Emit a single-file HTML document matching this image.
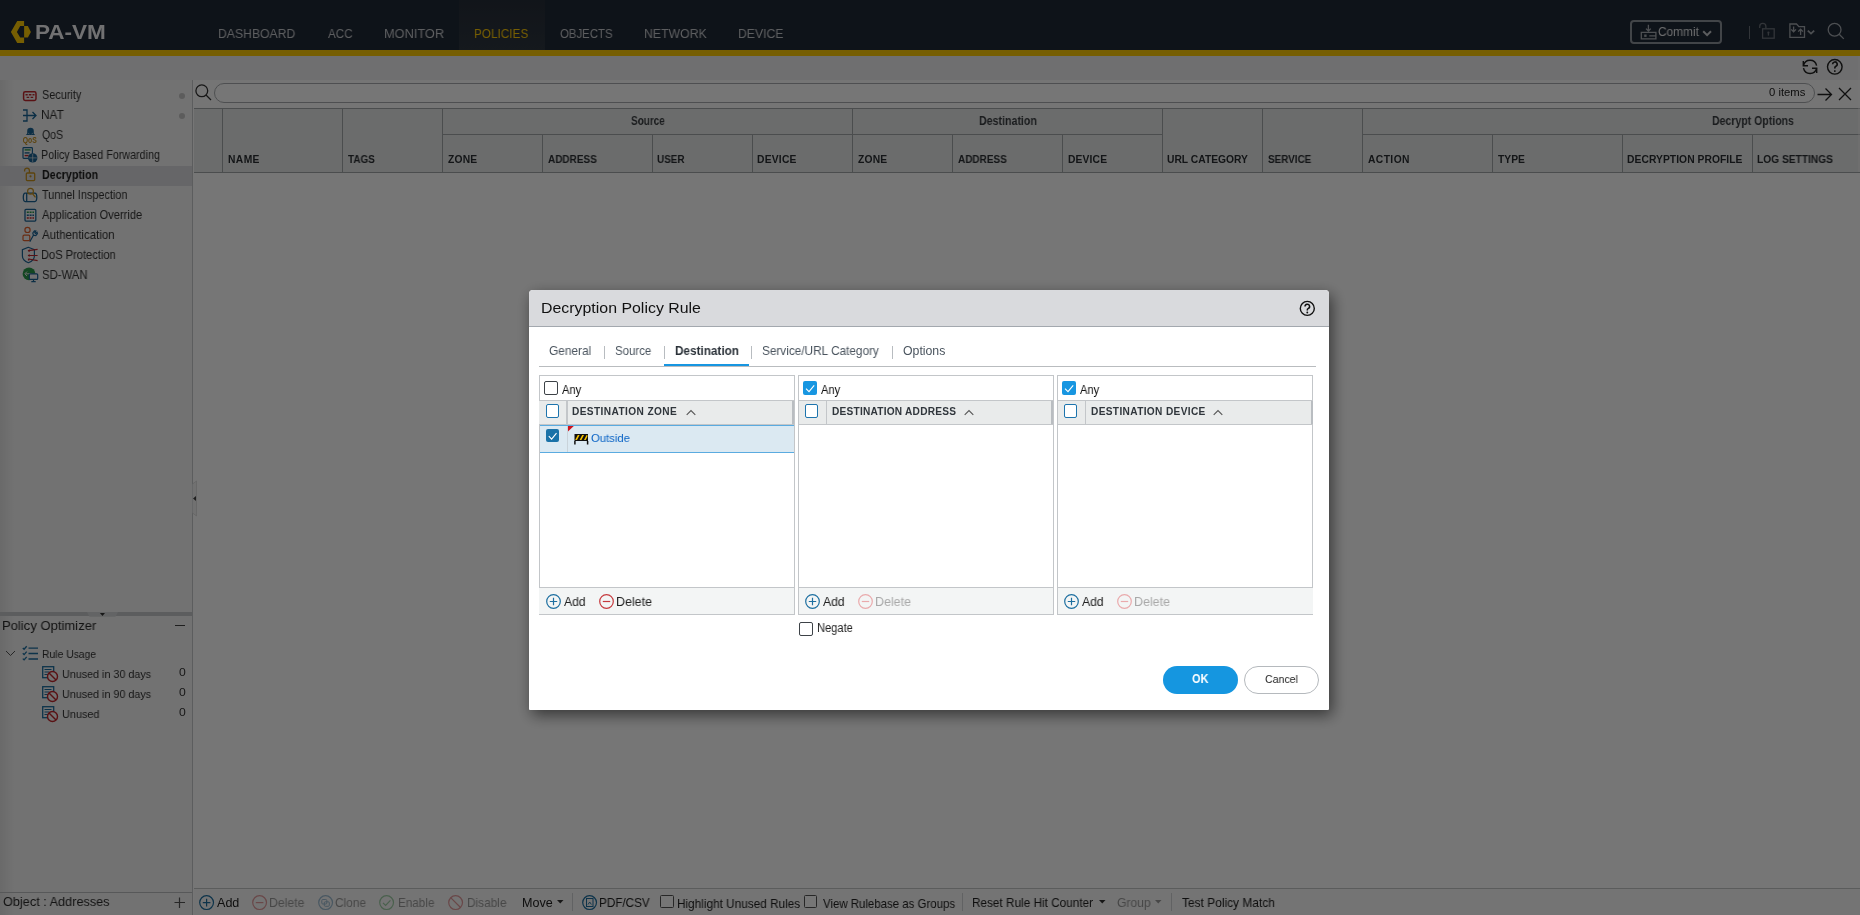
<!DOCTYPE html>
<html><head><meta charset="utf-8"><style>
*{box-sizing:border-box;margin:0;padding:0}
html,body{width:1860px;height:915px;overflow:hidden;background:#fff;font-family:"Liberation Sans",sans-serif;color:#333}
.a{position:absolute}
.t{position:absolute;white-space:nowrap;line-height:1;will-change:transform}
svg{position:absolute;overflow:visible}
</style></head><body>
<div class="a" style="left:0.00px;top:0.00px;width:1860.00px;height:50.00px;background:#202936;"></div>
<div class="a" style="left:459.00px;top:0.00px;width:86.00px;height:50.00px;background:linear-gradient(#262e39,#2e3640);"></div>
<div class="a" style="left:0.00px;top:50.00px;width:1860.00px;height:6.00px;background:#ffcb06;"></div>
<svg width="40" height="50" style="left:0;top:0"><polygon fill="#ffcb06" points="17.2,20.9 24.1,20.9 24.1,26.1 20.2,26.1 16.9,31.9 20.2,37.6 24.1,37.6 24.1,42.9 17.2,42.9 10.9,31.9"/><polygon fill="#ffcb06" points="24.1,26.1 27.9,26.1 30.9,31.9 27.9,37.6 24.1,37.6"/></svg>
<div class="t" style="left:35.24px;top:21.86px;font-size:20.29px;font-weight:bold;color:#f4f5f6;transform:scaleX(1.110);transform-origin:0 0;">PA-VM</div>
<div class="t" style="left:218.42px;top:26.91px;font-size:13.29px;color:#c9ccd0;transform:scaleX(0.919);transform-origin:0 0;">DASHBOARD</div>
<div class="t" style="left:327.94px;top:26.91px;font-size:13.29px;color:#c9ccd0;transform:scaleX(0.875);transform-origin:0 0;">ACC</div>
<div class="t" style="left:383.58px;top:26.91px;font-size:13.29px;color:#c9ccd0;transform:scaleX(0.961);transform-origin:0 0;">MONITOR</div>
<div class="t" style="left:474.46px;top:26.91px;font-size:13.29px;color:#ffcb06;transform:scaleX(0.886);transform-origin:0 0;">POLICIES</div>
<div class="t" style="left:560.39px;top:26.91px;font-size:13.29px;color:#c9ccd0;transform:scaleX(0.858);transform-origin:0 0;">OBJECTS</div>
<div class="t" style="left:644.02px;top:26.91px;font-size:13.29px;color:#c9ccd0;transform:scaleX(0.925);transform-origin:0 0;">NETWORK</div>
<div class="t" style="left:738.42px;top:26.91px;font-size:13.29px;color:#c9ccd0;transform:scaleX(0.920);transform-origin:0 0;">DEVICE</div>
<div class="a" style="left:1630.30px;top:20.30px;width:91.40px;height:23.50px;background:transparent;border:2px solid #8f959c;border-radius:4px"></div>
<svg style="left:1636px;top:18px" width="24" height="24"><g fill="none" stroke="#a9aeb3" stroke-width="1.3"><path d="M12.4 6.8v6M10 10.6l2.4 2.4 2.4-2.4"/><path d="M19.9 17.2V14.4H5.3v6.5h14.6v-3.1h-6.6"/></g><rect x="8.2" y="16.5" width="2.4" height="2.4" fill="#a9aeb3"/></svg>
<div class="t" style="left:1657.81px;top:25.81px;font-size:12.57px;color:#e8eaec;transform:scaleX(0.945);transform-origin:0 0;">Commit</div>
<svg style="left:1702px;top:29.5px" width="10" height="7"><path d="M1.2 1.3l3.9 3.9 3.9-3.9" fill="none" stroke="#c6cacd" stroke-width="2"/></svg>
<div class="a" style="left:1748.70px;top:26.20px;width:1.20px;height:12.40px;background:#6c737b;"></div>
<svg style="left:0;top:0" width="1860" height="50"><g fill="none" stroke-width="1.3"><path d="M1759.7 27.9v-1.5a3.1 3.1 0 0 1 6.2 0v2" stroke="#6c737b"/><rect x="1762.6" y="28.8" width="11.6" height="9.4" stroke="#6c737b"/><path d="M1768.4 32.8v2.8" stroke="#6c737b"/><path d="M1789.9 37.4V24h6.6l2.4 2.6h5.6v10.8z" stroke="#a5abb1"/><path d="M1793.6 26.4v5.4M1791.2 29.4l2.4 2.4 2.4-2.4M1800.6 35v-5.6M1798.2 31.6l2.4-2.4 2.4 2.4" stroke="#a5abb1"/><path d="M1807.8 30.6l3.2 3 3.2-3" stroke="#a5abb1" stroke-width="1.8"/><circle cx="1834.6" cy="29.7" r="6.4" stroke="#a5abb1"/><path d="M1839.2 34.3l4.6 4.6" stroke="#a5abb1"/></g><circle cx="1768.4" cy="32.6" r="1.1" fill="#6c737b"/></svg>
<div class="a" style="left:0.00px;top:56.00px;width:1860.00px;height:24.00px;background:#eff0f1;"></div>
<svg style="left:0;top:0" width="1860" height="80"><g fill="none" stroke="#222" stroke-width="1.4"><path d="M1803.5 65.6A6.7 6.7 0 0 1 1816.6 65.6"/><path d="M1803.3 60.9V65.7H1808"/><path d="M1816.6 68.2A6.7 6.7 0 0 1 1803.5 68.2"/><path d="M1812 68.3H1816.7V73"/><circle cx="1834.8" cy="66.8" r="7.3"/><path d="M1832.6 64.2a2.3 2.3 0 1 1 3.3 2.1c-.7.4-1.1.9-1.1 1.7v.6" stroke-width="1.6"/></g><rect x="1834" y="70.3" width="1.6" height="1.6" fill="#222"/></svg>
<div class="a" style="left:0.00px;top:80.00px;width:192.00px;height:835.00px;background:#f6f6f6;"></div>
<div class="a" style="left:0.00px;top:80.00px;width:14.00px;height:835.00px;background:linear-gradient(to right,rgba(0,0,0,0.07),rgba(0,0,0,0));"></div>
<div class="a" style="left:0.00px;top:166.00px;width:192.00px;height:20.00px;background:#dcdde0;"></div>
<div class="t" style="left:41.81px;top:88.96px;font-size:12.29px;color:#333;transform:scaleX(0.887);transform-origin:0 0;">Security</div>
<div class="t" style="left:41.35px;top:108.96px;font-size:12.29px;color:#333;transform:scaleX(0.963);transform-origin:0 0;">NAT</div>
<div class="t" style="left:41.83px;top:128.96px;font-size:12.29px;color:#333;transform:scaleX(0.852);transform-origin:0 0;">QoS</div>
<div class="t" style="left:41.44px;top:148.96px;font-size:12.29px;color:#333;transform:scaleX(0.876);transform-origin:0 0;">Policy Based Forwarding</div>
<div class="t" style="left:41.60px;top:168.96px;font-size:12.29px;font-weight:bold;color:#1c1c1c;transform:scaleX(0.874);transform-origin:0 0;">Decryption</div>
<div class="t" style="left:42.03px;top:188.96px;font-size:12.29px;color:#333;transform:scaleX(0.885);transform-origin:0 0;">Tunnel Inspection</div>
<div class="t" style="left:42.24px;top:208.96px;font-size:12.29px;color:#333;transform:scaleX(0.906);transform-origin:0 0;">Application Override</div>
<div class="t" style="left:42.24px;top:228.96px;font-size:12.29px;color:#333;transform:scaleX(0.932);transform-origin:0 0;">Authentication</div>
<div class="t" style="left:41.41px;top:248.96px;font-size:12.29px;color:#333;transform:scaleX(0.904);transform-origin:0 0;">DoS Protection</div>
<div class="t" style="left:41.79px;top:268.96px;font-size:12.29px;color:#333;transform:scaleX(0.923);transform-origin:0 0;">SD-WAN</div>
<div class="a" style="left:179px;top:93px;width:6px;height:6px;border-radius:50%;background:#c7c7c7"></div>
<div class="a" style="left:179px;top:113px;width:6px;height:6px;border-radius:50%;background:#c7c7c7"></div>
<svg style="left:0;top:0" width="192" height="300"><rect x="23.6" y="91.8" width="12.4" height="8.6" rx="1.6" fill="none" stroke="#c0272d" stroke-width="1.5"/><path d="M25.5 94.8h2.2M28.8 94.8h2.6M32.5 94.8h2M26.6 97.4h2.6M30.6 97.4h2.6" stroke="#c0272d" stroke-width="1.4"/><g fill="none" stroke="#1a6496" stroke-width="1.3"><path d="M23 110h4v11h-4M23 115.5h13M32.5 112l3.5 3.5-3.5 3.5"/></g><path d="M27.2 133.5V131a3.3 3.3 0 0 1 6.6 0v2.5l1.3 1.6H25.9z" fill="#1a6496"/><path d="M28.3 133.3l1 0.6M32.7 133.3l-1 0.6" stroke="#e8e8e8" stroke-width="0.8"/><text x="22.8" y="142.6" font-size="8.6" font-weight="bold" fill="#c8921e" font-family="Liberation Sans" textLength="14" lengthAdjust="spacingAndGlyphs">QoS</text><rect x="23" y="147.6" width="9.4" height="10.8" rx="0.8" fill="none" stroke="#1a6496" stroke-width="1.2"/><path d="M24.6 149.9h6" stroke="#2a9a4a" stroke-width="1.4"/><path d="M24.6 152.9h5" stroke="#1a6496" stroke-width="1.4"/><path d="M24.6 155.6h4" stroke="#c0272d" stroke-width="1.4"/><circle cx="32.7" cy="157.9" r="4.7" fill="#1a6496"/><path d="M32.7 153.8v8.2M28.6 157.9h8.2" stroke="#e6e6e6" stroke-width="0.7"/><g fill="none" stroke="#c8921e" stroke-width="1.3"><path d="M24.6 171.5v-1a2.4 2.4 0 0 1 4.8 0v2.4"/><rect x="26.3" y="173" width="8.4" height="7.6" rx="1"/></g><circle cx="30.5" cy="176.3" r="1.1" fill="#c8921e"/><path d="M25.2 193.1h9.6a2 4.25 0 0 1 0 8.5H25.2a1.9 4.25 0 0 1 0-8.5zM26.7 193.3v8.2" fill="none" stroke="#1a6496" stroke-width="1.3"/><circle cx="30.5" cy="191.3" r="2.9" fill="none" stroke="#c8921e" stroke-width="1.2"/><path d="M32.5 193.6l3 3.8" stroke="#c8921e" stroke-width="1.3"/><rect x="25" y="209.3" width="10.8" height="11.8" rx="1" fill="none" stroke="#1a6496" stroke-width="1.3"/><path d="M26.8 212.3h7.2" stroke="#2a9a4a" stroke-width="1.5" stroke-dasharray="2 0.8"/><path d="M26.8 215.2h7.2" stroke="#1a6496" stroke-width="1.5" stroke-dasharray="2 0.8"/><path d="M26.8 218.1h7.2" stroke="#c0272d" stroke-width="1.5" stroke-dasharray="2 0.8"/><circle cx="27.5" cy="229.9" r="2.6" fill="none" stroke="#e0602a" stroke-width="1.2"/><rect x="23" y="235.2" width="6.8" height="5.4" rx="1.2" fill="none" stroke="#e0602a" stroke-width="1.2"/><path d="M29.8 241.8l3.6-6.6M33.4 235.2l-0.6-2.2 1.6-2.2 1.4 0.2-1 1.6 0.8 0.8 1.4-1.2 0.4 1.4-1.6 2z" fill="none" stroke="#1a6496" stroke-width="1.2"/><path d="M28.4 247.3l-6 2.3v6.5c0 3.2 3 5.6 6 6.6 3-1 6-3.4 6-6.6v-6.5z" fill="none" stroke="#1a6496" stroke-width="1.2"/><path d="M37.6 249.4l-9.2 1.2M37.6 255.5h-9.6M37.6 260.6l-9.2-1.6" stroke="#c0272d" stroke-width="1.2"/><path d="M27.6 250.8l2-1.6v3zM27.6 255.5l2-1.5v3zM27.6 259l2-0.6-0.6 2.8z" fill="#c0272d"/><circle cx="29" cy="273.8" r="6.4" fill="#2a9a4a"/><path d="M31.5 273.8h-6M27 271.6l-2.2 2.2 2.2 2.2" fill="none" stroke="#e6e6e6" stroke-width="1"/><rect x="29.3" y="273.8" width="8.4" height="5.6" rx="1" fill="#f6f6f6" stroke="#1a6496" stroke-width="1.2"/><path d="M33.5 279.4v2M31.3 281.6h4.4" stroke="#1a6496" stroke-width="1.2"/></svg>
<div class="a" style="left:0.00px;top:612.00px;width:192.00px;height:4.00px;background:#c8cacc;"></div>
<svg style="left:88px;top:612px" width="30" height="5"><path d="M-1 0.1L1.6 4.8h25.8L30 0.1z" fill="#d6d8da"/><path d="M11.9 1h5.1L14.45 4z" fill="#333"/></svg>
<div class="t" style="left:2.36px;top:618.56px;font-size:13.57px;color:#2a2a2a;transform:scaleX(0.962);transform-origin:0 0;">Policy Optimizer</div>
<div class="a" style="left:174.70px;top:624.50px;width:10.50px;height:1.30px;background:#444;"></div>
<svg style="left:5px;top:650px" width="11" height="8"><path d="M1 1l4.5 4.5L10 1" fill="none" stroke="#555" stroke-width="1"/></svg>
<svg style="left:22px;top:645px" width="17" height="17"><g fill="none" stroke="#1d6fa0" stroke-width="1.3"><path d="M0.8 3l1.3 1.3 2.6-3M0.8 8.3l1.3 1.3 2.6-3M0.8 13.6l1.3 1.3 2.6-3"/><path d="M6.5 3.2h9.5M6.5 8.5h9.5M6.5 14h9.5"/></g></svg>
<div class="t" style="left:41.57px;top:649.09px;font-size:11.43px;color:#333;transform:scaleX(0.906);transform-origin:0 0;">Rule Usage</div>
<svg style="left:42px;top:666px" width="17" height="17"><rect x="0.7" y="0.7" width="11" height="11" fill="#f6f6f6" stroke="#1d6fa0" stroke-width="1.3"/><path d="M2.5 3.5h7M2.5 6h5M2.5 8.5h4" stroke="#1d6fa0" stroke-width="1"/><circle cx="10.5" cy="10.5" r="5" fill="#f6f6f6" stroke="#c0272d" stroke-width="1.4"/><path d="M7 7l7 7" stroke="#c0272d" stroke-width="1.4"/></svg>
<div class="t" style="left:61.59px;top:668.04px;font-size:11.71px;color:#333;transform:scaleX(0.919);transform-origin:0 0;">Unused in 30 days</div>
<div class="t" style="left:179.31px;top:666.63px;font-size:11.14px;color:#333;transform:scaleX(1.096);transform-origin:0 0;">0</div>
<svg style="left:42px;top:686px" width="17" height="17"><rect x="0.7" y="0.7" width="11" height="11" fill="#f6f6f6" stroke="#1d6fa0" stroke-width="1.3"/><path d="M2.5 3.5h7M2.5 6h5M2.5 8.5h4" stroke="#1d6fa0" stroke-width="1"/><circle cx="10.5" cy="10.5" r="5" fill="#f6f6f6" stroke="#c0272d" stroke-width="1.4"/><path d="M7 7l7 7" stroke="#c0272d" stroke-width="1.4"/></svg>
<div class="t" style="left:61.59px;top:688.04px;font-size:11.71px;color:#333;transform:scaleX(0.919);transform-origin:0 0;">Unused in 90 days</div>
<div class="t" style="left:179.31px;top:686.63px;font-size:11.14px;color:#333;transform:scaleX(1.096);transform-origin:0 0;">0</div>
<svg style="left:42px;top:706px" width="17" height="17"><rect x="0.7" y="0.7" width="11" height="11" fill="#f6f6f6" stroke="#1d6fa0" stroke-width="1.3"/><path d="M2.5 3.5h7M2.5 6h5M2.5 8.5h4" stroke="#1d6fa0" stroke-width="1"/><circle cx="10.5" cy="10.5" r="5" fill="#f6f6f6" stroke="#c0272d" stroke-width="1.4"/><path d="M7 7l7 7" stroke="#c0272d" stroke-width="1.4"/></svg>
<div class="t" style="left:61.58px;top:708.04px;font-size:11.71px;color:#333;transform:scaleX(0.930);transform-origin:0 0;">Unused</div>
<div class="t" style="left:179.31px;top:706.63px;font-size:11.14px;color:#333;transform:scaleX(1.096);transform-origin:0 0;">0</div>
<div class="a" style="left:0.00px;top:891.50px;width:192.00px;height:1.50px;background:#bdbfc1;"></div>
<div class="t" style="left:2.83px;top:895.46px;font-size:13.57px;color:#2a2a2a;transform:scaleX(0.936);transform-origin:0 0;">Object : Addresses</div>
<svg style="left:174px;top:897px" width="12" height="12"><path d="M5.5 0.5v10.5M0.5 5.5h10.5" stroke="#555" stroke-width="1.2"/></svg>
<div class="a" style="left:192.00px;top:80.00px;width:1.20px;height:835.00px;background:#c6c9cc;"></div>
<svg style="left:192px;top:481px" width="6" height="36"><path d="M0.5 3L4.5 0v35L0.5 32" fill="#f4f4f4" stroke="#cfcfcf" stroke-width="0.6"/><path d="M1 17.5L4 15v5z" fill="#444"/></svg>
<div class="a" style="left:193.60px;top:80.00px;width:1666.40px;height:28.00px;background:#fdfdfd;"></div>
<svg style="left:195px;top:84px" width="18" height="18"><circle cx="6.8" cy="6.8" r="5.9" fill="none" stroke="#333" stroke-width="1.3"/><path d="M11 11l5 5" stroke="#333" stroke-width="1.3"/></svg>
<div class="a" style="left:214.30px;top:83.00px;width:1600.30px;height:19.70px;background:#fff;border:1.3px solid #a9acaf;border-radius:10px"></div>
<div class="t" style="left:1769.25px;top:86.51px;font-size:11.29px;color:#222;transform:scaleX(0.987);transform-origin:0 0;">0 items</div>
<svg style="left:1817px;top:87px" width="16" height="15"><path d="M0.5 7.5h14M8.5 1.5l6 6-6 6" fill="none" stroke="#222" stroke-width="1.3"/></svg>
<svg style="left:1838px;top:87px" width="14" height="14"><path d="M1 1l12 12M13 1L1 13" fill="none" stroke="#222" stroke-width="1.3"/></svg>
<div class="a" style="left:193.60px;top:108.00px;width:1666.40px;height:64.50px;background:#e7e9e9;"></div>
<div class="a" style="left:193.60px;top:107.50px;width:1666.40px;height:1.50px;background:#a3a6a8;"></div>
<div class="a" style="left:193.60px;top:171.50px;width:1666.40px;height:1.50px;background:#a3a6a8;"></div>
<div class="a" style="left:442.50px;top:133.80px;width:720.10px;height:1.30px;background:#a3a6a8;"></div>
<div class="a" style="left:1362.60px;top:133.80px;width:497.40px;height:1.30px;background:#a3a6a8;"></div>
<div class="a" style="left:221.70px;top:108.00px;width:1.40px;height:64.50px;background:#a3a6a8;"></div>
<div class="a" style="left:341.90px;top:108.00px;width:1.40px;height:64.50px;background:#a3a6a8;"></div>
<div class="a" style="left:441.70px;top:108.00px;width:1.40px;height:64.50px;background:#a3a6a8;"></div>
<div class="a" style="left:851.70px;top:108.00px;width:1.40px;height:64.50px;background:#a3a6a8;"></div>
<div class="a" style="left:1161.90px;top:108.00px;width:1.40px;height:64.50px;background:#a3a6a8;"></div>
<div class="a" style="left:1261.70px;top:108.00px;width:1.40px;height:64.50px;background:#a3a6a8;"></div>
<div class="a" style="left:1361.90px;top:108.00px;width:1.40px;height:64.50px;background:#a3a6a8;"></div>
<div class="a" style="left:541.80px;top:134.50px;width:1.40px;height:38.00px;background:#a3a6a8;"></div>
<div class="a" style="left:651.80px;top:134.50px;width:1.40px;height:38.00px;background:#a3a6a8;"></div>
<div class="a" style="left:751.70px;top:134.50px;width:1.40px;height:38.00px;background:#a3a6a8;"></div>
<div class="a" style="left:951.60px;top:134.50px;width:1.40px;height:38.00px;background:#a3a6a8;"></div>
<div class="a" style="left:1061.70px;top:134.50px;width:1.40px;height:38.00px;background:#a3a6a8;"></div>
<div class="a" style="left:1491.80px;top:134.50px;width:1.40px;height:38.00px;background:#a3a6a8;"></div>
<div class="a" style="left:1621.80px;top:134.50px;width:1.40px;height:38.00px;background:#a3a6a8;"></div>
<div class="a" style="left:1751.70px;top:134.50px;width:1.40px;height:38.00px;background:#a3a6a8;"></div>
<div class="t" style="left:227.53px;top:155.06px;font-size:10.29px;font-weight:bold;color:#2b2f33;letter-spacing:0.40px;">NAME</div>
<div class="t" style="left:348.00px;top:155.06px;font-size:10.29px;font-weight:bold;color:#2b2f33;transform:scaleX(0.963);transform-origin:0 0;">TAGS</div>
<div class="t" style="left:447.69px;top:155.06px;font-size:10.29px;font-weight:bold;color:#2b2f33;letter-spacing:0.21px;">ZONE</div>
<div class="t" style="left:547.55px;top:155.06px;font-size:10.29px;font-weight:bold;color:#2b2f33;transform:scaleX(0.970);transform-origin:0 0;">ADDRESS</div>
<div class="t" style="left:657.41px;top:155.06px;font-size:10.29px;font-weight:bold;color:#2b2f33;transform:scaleX(0.960);transform-origin:0 0;">USER</div>
<div class="t" style="left:757.33px;top:155.06px;font-size:10.29px;font-weight:bold;color:#2b2f33;letter-spacing:0.23px;">DEVICE</div>
<div class="t" style="left:857.69px;top:155.06px;font-size:10.29px;font-weight:bold;color:#2b2f33;letter-spacing:0.21px;">ZONE</div>
<div class="t" style="left:957.85px;top:155.06px;font-size:10.29px;font-weight:bold;color:#2b2f33;transform:scaleX(0.970);transform-origin:0 0;">ADDRESS</div>
<div class="t" style="left:1067.53px;top:155.06px;font-size:10.29px;font-weight:bold;color:#2b2f33;letter-spacing:0.15px;">DEVICE</div>
<div class="t" style="left:1167.19px;top:155.06px;font-size:10.29px;font-weight:bold;color:#2b2f33;">URL CATEGORY</div>
<div class="t" style="left:1267.70px;top:155.06px;font-size:10.29px;font-weight:bold;color:#2b2f33;transform:scaleX(0.962);transform-origin:0 0;">SERVICE</div>
<div class="t" style="left:1367.74px;top:155.06px;font-size:10.29px;font-weight:bold;color:#2b2f33;letter-spacing:0.41px;">ACTION</div>
<div class="t" style="left:1497.90px;top:155.06px;font-size:10.29px;font-weight:bold;color:#2b2f33;transform:scaleX(0.985);transform-origin:0 0;">TYPE</div>
<div class="t" style="left:1627.33px;top:155.06px;font-size:10.29px;font-weight:bold;color:#2b2f33;letter-spacing:0.06px;">DECRYPTION PROFILE</div>
<div class="t" style="left:1757.34px;top:155.06px;font-size:10.29px;font-weight:bold;color:#2b2f33;transform:scaleX(0.991);transform-origin:0 0;">LOG SETTINGS</div>
<div class="t" style="left:631.00px;top:114.71px;font-size:12.57px;font-weight:bold;color:#3a3e42;transform:scaleX(0.794);transform-origin:0 0;">Source</div>
<div class="t" style="left:978.91px;top:114.71px;font-size:12.57px;font-weight:bold;color:#3a3e42;transform:scaleX(0.846);transform-origin:0 0;">Destination</div>
<div class="t" style="left:1711.81px;top:114.71px;font-size:12.57px;font-weight:bold;color:#3a3e42;transform:scaleX(0.838);transform-origin:0 0;">Decrypt Options</div>
<div class="a" style="left:193.60px;top:887.50px;width:1666.40px;height:1.50px;background:#c4c6c8;"></div>
<div class="a" style="left:193.60px;top:889.00px;width:1666.40px;height:26.00px;background:#fafafa;"></div>
<div class="a" style="left:1858.00px;top:56.00px;width:2.00px;height:116.00px;background:rgba(255,255,255,0.35);"></div>
<svg style="left:198.7px;top:895.3px" width="16" height="16"><circle cx="7.6" cy="7.6" r="6.9" fill="none" stroke="#1d6fa0" stroke-width="1.2"/><path d="M7.6 3.8v7.6M3.8 7.6h7.6" stroke="#1d6fa0" stroke-width="1.2"/></svg>
<div class="t" style="left:216.94px;top:896.51px;font-size:12.57px;color:#222;transform:scaleX(0.991);transform-origin:0 0;">Add</div>
<svg style="left:252.0px;top:895.3px" width="16" height="16"><circle cx="7.6" cy="7.6" r="6.9" fill="none" stroke="#e39a9c" stroke-width="1.2"/><path d="M3.8 7.6h7.6" stroke="#e39a9c" stroke-width="1.2"/></svg>
<div class="t" style="left:269.02px;top:896.51px;font-size:12.57px;color:#9a9a9a;transform:scaleX(0.978);transform-origin:0 0;">Delete</div>
<svg style="left:317.5px;top:895.3px" width="16" height="16"><circle cx="7.6" cy="7.6" r="6.9" fill="none" stroke="#9dbdd3" stroke-width="1.2"/><rect x="3.8" y="4.5" width="5" height="4.5" rx="1" fill="none" stroke="#9dbdd3" stroke-width="1"/><rect x="6.3" y="6.8" width="5" height="4.5" rx="1" fill="none" stroke="#9dbdd3" stroke-width="1"/></svg>
<div class="t" style="left:335.40px;top:896.51px;font-size:12.57px;color:#9a9a9a;transform:scaleX(0.949);transform-origin:0 0;">Clone</div>
<svg style="left:378.5px;top:895.3px" width="16" height="16"><circle cx="7.6" cy="7.6" r="6.9" fill="none" stroke="#9fd0a6" stroke-width="1.2"/><path d="M4 7.8l2.6 2.6 4.8-5" fill="none" stroke="#9fd0a6" stroke-width="1.2"/></svg>
<div class="t" style="left:398.06px;top:896.51px;font-size:12.57px;color:#9a9a9a;transform:scaleX(0.931);transform-origin:0 0;">Enable</div>
<svg style="left:447.5px;top:895.3px" width="16" height="16"><circle cx="7.6" cy="7.6" r="6.9" fill="none" stroke="#e39a9c" stroke-width="1.2"/><path d="M2.7 2.7l9.8 9.8" stroke="#e39a9c" stroke-width="1.2"/></svg>
<div class="t" style="left:467.05px;top:896.51px;font-size:12.57px;color:#9a9a9a;transform:scaleX(0.942);transform-origin:0 0;">Disable</div>
<div class="t" style="left:521.70px;top:896.51px;font-size:12.57px;color:#222;transform:scaleX(0.994);transform-origin:0 0;">Move</div>
<svg style="left:556.5px;top:900px" width="7" height="4"><path d="M0 0h6.5L3.25 3.5z" fill="#333"/></svg>
<div class="a" style="left:572.20px;top:893.00px;width:1.20px;height:18.00px;background:#d2d4d6;"></div>
<svg style="left:581.7px;top:895.3px" width="16" height="16"><circle cx="7.6" cy="7.6" r="6.9" fill="none" stroke="#1d6fa0" stroke-width="1.2"/><rect x="4.5" y="3.5" width="6.5" height="8" fill="none" stroke="#1d6fa0" stroke-width="1"/><path d="M6 9.5l1.7-2.5 1.7 2.5" fill="none" stroke="#1d6fa0" stroke-width="0.9"/></svg>
<div class="t" style="left:599.06px;top:896.51px;font-size:12.57px;color:#222;transform:scaleX(0.931);transform-origin:0 0;">PDF/CSV</div>
<div class="a" style="left:660.20px;top:895.00px;width:13.60px;height:13.20px;background:#fff;border:1.2px solid #555;border-radius:1.5px"></div>
<div class="t" style="left:677.36px;top:897.71px;font-size:12.57px;color:#222;transform:scaleX(0.938);transform-origin:0 0;">Highlight Unused Rules</div>
<div class="a" style="left:804.40px;top:895.00px;width:13.10px;height:13.20px;background:#fff;border:1.2px solid #555;border-radius:1.5px"></div>
<div class="t" style="left:822.74px;top:897.71px;font-size:12.57px;color:#222;transform:scaleX(0.911);transform-origin:0 0;">View Rulebase as Groups</div>
<div class="a" style="left:961.50px;top:893.00px;width:1.20px;height:18.00px;background:#d2d4d6;"></div>
<div class="t" style="left:972.06px;top:896.51px;font-size:12.57px;color:#222;transform:scaleX(0.937);transform-origin:0 0;">Reset Rule Hit Counter</div>
<svg style="left:1098.5px;top:900px" width="7" height="4"><path d="M0 0h6.5L3.25 3.5z" fill="#333"/></svg>
<div class="t" style="left:1116.90px;top:896.51px;font-size:12.57px;color:#9a9a9a;transform:scaleX(0.961);transform-origin:0 0;">Group</div>
<svg style="left:1154.5px;top:900px" width="7" height="4"><path d="M0 0h6.5L3.25 3.5z" fill="#999"/></svg>
<div class="a" style="left:1170.50px;top:893.00px;width:1.20px;height:18.00px;background:#d2d4d6;"></div>
<div class="t" style="left:1182.30px;top:896.51px;font-size:12.57px;color:#222;transform:scaleX(0.950);transform-origin:0 0;">Test Policy Match</div>
<div class="a" style="left:0;top:0;width:1860px;height:915px;background:rgba(0,0,0,0.537)"></div>
<div class="a" style="left:529px;top:290px;width:800px;height:420px;background:#fff;border-radius:4px 4px 1px 1px;box-shadow:3px 5px 15px rgba(0,0,0,0.55)"></div>
<div class="a" style="left:529px;top:290px;width:800px;height:37px;background:#d9dadd;border-radius:4px 4px 0 0;border-bottom:1.3px solid #a3a8ae"></div>
<div class="t" style="left:540.73px;top:300.05px;font-size:15.00px;color:#111;transform:scaleX(1.060);transform-origin:0 0;">Decryption Policy Rule</div>
<svg style="left:1299px;top:300px" width="17" height="17"><circle cx="8.3" cy="8.4" r="7" fill="none" stroke="#111" stroke-width="1.4"/><path d="M6 6.4a2.3 2.3 0 1 1 3.1 2.2c-.6.3-.8.7-.8 1.4v.5" fill="none" stroke="#111" stroke-width="1.5"/><circle cx="8.3" cy="12.5" r="0.95" fill="#111"/></svg>
<div class="t" style="left:549.31px;top:345.46px;font-size:12.29px;color:#4a545e;transform:scaleX(0.965);transform-origin:0 0;">General</div>
<div class="t" style="left:614.88px;top:345.46px;font-size:12.29px;color:#4a545e;transform:scaleX(0.932);transform-origin:0 0;">Source</div>
<div class="t" style="left:674.74px;top:345.46px;font-size:12.29px;font-weight:bold;color:#2a3138;transform:scaleX(0.958);transform-origin:0 0;">Destination</div>
<div class="t" style="left:762.17px;top:345.46px;font-size:12.29px;color:#4a545e;transform:scaleX(0.960);transform-origin:0 0;">Service/URL Category</div>
<div class="t" style="left:903.25px;top:345.46px;font-size:12.29px;color:#4a545e;">Options</div>
<div class="a" style="left:603.80px;top:346.00px;width:1.20px;height:12.60px;background:#b8bcc0;"></div>
<div class="a" style="left:664.00px;top:346.00px;width:1.20px;height:12.60px;background:#b8bcc0;"></div>
<div class="a" style="left:751.00px;top:346.00px;width:1.20px;height:12.60px;background:#b8bcc0;"></div>
<div class="a" style="left:892.10px;top:346.00px;width:1.20px;height:12.60px;background:#b8bcc0;"></div>
<div class="a" style="left:539.00px;top:366.00px;width:777.00px;height:1.20px;background:#b9bcbf;"></div>
<div class="a" style="left:664.30px;top:363.60px;width:84.60px;height:2.60px;background:#1796e1;"></div>
<div class="a" style="left:538.70px;top:375.30px;width:256.30px;height:239.30px;background:#fff;border:1.2px solid #c3c6c9"></div>
<div class="a" style="left:543.80px;top:381.00px;width:13.80px;height:13.80px;background:#fff;border:1.2px solid #3d4247;border-radius:2px"></div>
<div class="t" style="left:561.84px;top:384.82px;font-size:11.86px;color:#111;transform:scaleX(0.934);transform-origin:0 0;">Any</div>
<div class="a" style="left:539.30px;top:400.10px;width:255.10px;height:24.90px;background:#e9ebeb;border-top:1.2px solid #c3c6c9;border-bottom:1.2px solid #c3c6c9"></div>
<div class="a" style="left:545.80px;top:404.10px;width:13.00px;height:13.60px;background:#fff;border:1.8px solid #1d74ad;border-radius:2px"></div>
<div class="a" style="left:566.40px;top:401.00px;width:1.30px;height:23.30px;background:#c3c6c9;"></div>
<div class="a" style="left:792.40px;top:401.00px;width:2.00px;height:23.30px;background:#b9bdc1;"></div>
<div class="t" style="left:572.34px;top:406.68px;font-size:10.14px;font-weight:bold;color:#30363c;letter-spacing:0.40px;">DESTINATION ZONE</div>
<svg style="left:686.0px;top:408.5px" width="11" height="7"><path d="M0.7 5.8l4.3-4.3 4.3 4.3" fill="none" stroke="#555" stroke-width="1.1"/></svg>
<div class="a" style="left:539.30px;top:587.20px;width:255.10px;height:26.80px;background:#f3f5f5;border-top:1.2px solid #c3c6c9"></div>
<svg style="left:545.6px;top:593.8px" width="16" height="16"><circle cx="7.5" cy="7.5" r="6.8" fill="none" stroke="#1d6fa0" stroke-width="1.2"/><path d="M7.5 3.8v7.4M3.8 7.5h7.4" stroke="#1d6fa0" stroke-width="1.2"/></svg>
<div class="t" style="left:563.94px;top:595.69px;font-size:12.71px;color:#222;transform:scaleX(0.957);transform-origin:0 0;">Add</div>
<svg style="left:598.5px;top:593.8px" width="16" height="16"><circle cx="7.5" cy="7.5" r="6.8" fill="none" stroke="#c63a3e" stroke-width="1.2"/><path d="M3.8 7.5h7.4" stroke="#c63a3e" stroke-width="1.2"/></svg>
<div class="t" style="left:615.60px;top:595.69px;font-size:12.71px;color:#222;transform:scaleX(0.979);transform-origin:0 0;">Delete</div>
<div class="a" style="left:797.90px;top:375.30px;width:256.10px;height:239.30px;background:#fff;border:1.2px solid #c3c6c9"></div>
<div class="a" style="left:803.00px;top:381.00px;width:13.80px;height:13.80px;background:#1796e1;border-radius:2px"></div><svg style="left:803.0px;top:381.0px" width="13.8" height="13.8"><path d="M3.0 7.6l3.0 3.0 5.2 -6.2" fill="none" stroke="#fff" stroke-width="1.1"/></svg>
<div class="t" style="left:821.04px;top:384.82px;font-size:11.86px;color:#111;transform:scaleX(0.934);transform-origin:0 0;">Any</div>
<div class="a" style="left:798.50px;top:400.10px;width:254.90px;height:24.90px;background:#e9ebeb;border-top:1.2px solid #c3c6c9;border-bottom:1.2px solid #c3c6c9"></div>
<div class="a" style="left:805.00px;top:404.10px;width:13.00px;height:13.60px;background:#fff;border:1.8px solid #1d74ad;border-radius:2px"></div>
<div class="a" style="left:825.60px;top:401.00px;width:1.30px;height:23.30px;background:#c3c6c9;"></div>
<div class="a" style="left:1051.40px;top:401.00px;width:2.00px;height:23.30px;background:#b9bdc1;"></div>
<div class="t" style="left:831.64px;top:406.68px;font-size:10.14px;font-weight:bold;color:#30363c;letter-spacing:0.23px;">DESTINATION ADDRESS</div>
<svg style="left:963.9px;top:408.5px" width="11" height="7"><path d="M0.7 5.8l4.3-4.3 4.3 4.3" fill="none" stroke="#555" stroke-width="1.1"/></svg>
<div class="a" style="left:798.50px;top:587.20px;width:254.90px;height:26.80px;background:#f3f5f5;border-top:1.2px solid #c3c6c9"></div>
<svg style="left:804.8px;top:593.8px" width="16" height="16"><circle cx="7.5" cy="7.5" r="6.8" fill="none" stroke="#1d6fa0" stroke-width="1.2"/><path d="M7.5 3.8v7.4M3.8 7.5h7.4" stroke="#1d6fa0" stroke-width="1.2"/></svg>
<div class="t" style="left:823.14px;top:595.69px;font-size:12.71px;color:#222;transform:scaleX(0.957);transform-origin:0 0;">Add</div>
<svg style="left:857.7px;top:593.8px" width="16" height="16"><circle cx="7.5" cy="7.5" r="6.8" fill="none" stroke="#eaaaac" stroke-width="1.2"/><path d="M3.8 7.5h7.4" stroke="#eaaaac" stroke-width="1.2"/></svg>
<div class="t" style="left:874.80px;top:595.69px;font-size:12.71px;color:#a8a8a8;transform:scaleX(0.979);transform-origin:0 0;">Delete</div>
<div class="a" style="left:1057.10px;top:375.30px;width:256.20px;height:239.30px;background:#fff;border:1.2px solid #c3c6c9"></div>
<div class="a" style="left:1062.20px;top:381.00px;width:13.80px;height:13.80px;background:#1796e1;border-radius:2px"></div><svg style="left:1062.2px;top:381.0px" width="13.8" height="13.8"><path d="M3.0 7.6l3.0 3.0 5.2 -6.2" fill="none" stroke="#fff" stroke-width="1.1"/></svg>
<div class="t" style="left:1080.24px;top:384.82px;font-size:11.86px;color:#111;transform:scaleX(0.934);transform-origin:0 0;">Any</div>
<div class="a" style="left:1057.70px;top:400.10px;width:255.00px;height:24.90px;background:#e9ebeb;border-top:1.2px solid #c3c6c9;border-bottom:1.2px solid #c3c6c9"></div>
<div class="a" style="left:1064.20px;top:404.10px;width:13.00px;height:13.60px;background:#fff;border:1.8px solid #1d74ad;border-radius:2px"></div>
<div class="a" style="left:1084.80px;top:401.00px;width:1.30px;height:23.30px;background:#c3c6c9;"></div>
<div class="a" style="left:1310.70px;top:401.00px;width:2.00px;height:23.30px;background:#b9bdc1;"></div>
<div class="t" style="left:1090.74px;top:406.68px;font-size:10.14px;font-weight:bold;color:#30363c;letter-spacing:0.35px;">DESTINATION DEVICE</div>
<svg style="left:1212.7px;top:408.5px" width="11" height="7"><path d="M0.7 5.8l4.3-4.3 4.3 4.3" fill="none" stroke="#555" stroke-width="1.1"/></svg>
<div class="a" style="left:1057.70px;top:587.20px;width:255.00px;height:26.80px;background:#f3f5f5;border-top:1.2px solid #c3c6c9"></div>
<svg style="left:1064.0px;top:593.8px" width="16" height="16"><circle cx="7.5" cy="7.5" r="6.8" fill="none" stroke="#1d6fa0" stroke-width="1.2"/><path d="M7.5 3.8v7.4M3.8 7.5h7.4" stroke="#1d6fa0" stroke-width="1.2"/></svg>
<div class="t" style="left:1082.34px;top:595.69px;font-size:12.71px;color:#222;transform:scaleX(0.957);transform-origin:0 0;">Add</div>
<svg style="left:1116.9px;top:593.8px" width="16" height="16"><circle cx="7.5" cy="7.5" r="6.8" fill="none" stroke="#eaaaac" stroke-width="1.2"/><path d="M3.8 7.5h7.4" stroke="#eaaaac" stroke-width="1.2"/></svg>
<div class="t" style="left:1134.00px;top:595.69px;font-size:12.71px;color:#a8a8a8;transform:scaleX(0.979);transform-origin:0 0;">Delete</div>
<div class="a" style="left:539.90px;top:425.00px;width:253.80px;height:28.00px;background:#dbe9f2;border-top:1.2px solid #5aabe0;border-bottom:1.4px solid #5aabe0"></div>
<div class="a" style="left:566.80px;top:426.00px;width:1.20px;height:26.00px;background:#c9d3da;"></div>
<div class="a" style="left:546.10px;top:429.30px;width:12.90px;height:13.10px;background:#1a72a8;border-radius:2px"></div><svg style="left:546.1px;top:429.3px" width="12.9" height="13.1"><path d="M2.8 7.2l2.8 2.9 4.9 -5.9" fill="none" stroke="#fff" stroke-width="1.1"/></svg>
<svg style="left:567.5px;top:425.5px" width="6" height="6"><path d="M0 0h5.8L0 5.6z" fill="#d0111b"/></svg>
<svg style="left:574px;top:434px" width="15" height="11"><rect x="0.5" y="0" width="13.5" height="7" fill="#111"/><path d="M1.2 6l2.6-5h1.8l-2.6 5zM5.6 6l2.6-5h1.8l-2.6 5zM10 6l2.6-5h0.8v1.8l-1.7 3.2z" fill="#f5c400"/><path d="M0.9 7v3.5M13.6 7v3.5" stroke="#111" stroke-width="1.5"/></svg>
<div class="t" style="left:591.49px;top:432.44px;font-size:11.71px;color:#0a64c6;transform:scaleX(0.967);transform-origin:0 0;">Outside</div>
<div class="a" style="left:799.00px;top:622.00px;width:13.60px;height:13.60px;background:#fff;border:1.2px solid #3d4247;border-radius:2px"></div>
<div class="t" style="left:816.61px;top:622.10px;font-size:12.00px;color:#222;transform:scaleX(0.925);transform-origin:0 0;">Negate</div>
<div class="a" style="left:1162.80px;top:666.00px;width:75.20px;height:28.00px;background:#1596e0;border-radius:14px"></div>
<div class="t" style="left:1192.16px;top:673.08px;font-size:12.14px;font-weight:bold;color:#fff;transform:scaleX(0.903);transform-origin:0 0;">OK</div>
<div class="a" style="left:1244.00px;top:666.00px;width:75.00px;height:28.00px;background:#fff;border:1.2px solid #b5b9bd;border-radius:14px"></div>
<div class="t" style="left:1265.07px;top:673.24px;font-size:11.71px;color:#222;transform:scaleX(0.904);transform-origin:0 0;">Cancel</div>
</body></html>
